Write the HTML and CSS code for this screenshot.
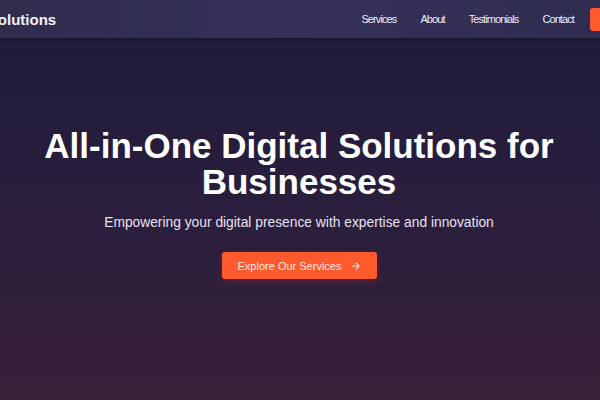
FILE: index.html
```html
<!DOCTYPE html>
<html>
<head>
<meta charset="utf-8">
<link rel="stylesheet" href="styles.css">
</head>
<body>
<header class="header">
  <div class="header-inner">
    <div class="logo">NexGen Solutions</div>
    <nav class="nav">
      <a class="nav-link" href="#">Services</a>
      <a class="nav-link" href="#">About</a>
      <a class="nav-link" href="#">Testimonials</a>
      <a class="nav-link" href="#">Contact</a>
      <a class="nav-cta" href="#">Get Started</a>
    </nav>
  </div>
</header>
<main class="hero">
  <h1 class="hero-title">All-in-One Digital Solutions for Businesses</h1>
  <p class="hero-sub">Empowering your digital presence with expertise and innovation</p>
  <a class="hero-btn" href="#">Explore Our Services <svg class="arrow" width="8" height="8" viewBox="0 0 8 8"><path d="M0.5 4H7M4.2 1.2L7 4L4.2 6.8" fill="none" stroke="#fbe9e3" stroke-width="1.1" stroke-linecap="round" stroke-linejoin="round"/></svg></a>
</main>
</body>
</html>
```
FILE: styles.css
```css
* { box-sizing: border-box; }
html, body { margin: 0; padding: 0; }
body {
  width: 600px;
  height: 400px;
  overflow: hidden;
  font-family: "Liberation Sans", Arial, sans-serif;
  background: linear-gradient(180deg, #1e1b3a 0%, #2b1f3d 60%, #3b2038 100%);
  color: #fff;
}
.header {
  height: 38px;
  background: linear-gradient(90deg, #2f2c4e 0%, #35315a 50%, #2f2c50 100%);
  box-shadow: 0 1px 3px rgba(0,0,0,0.3);
  overflow: hidden;
}
.header-inner {
  display: flex;
  align-items: center;
  height: 38px;
  width: 600px;
}
.logo {
  font-size: 15px;
  font-weight: bold;
  color: #f2f2f6;
  white-space: nowrap;
  margin-left: -73px;
}
.nav {
  display: flex;
  align-items: center;
  margin-left: auto;
  gap: 24px;
  margin-right: -78px;
  flex-shrink: 0;
}
.nav-link {
  color: #ececf3;
  text-decoration: none;
  font-size: 11px;
  letter-spacing: -0.9px;
  white-space: nowrap;
}
.nav-cta {
  background: #ff5a2e;
  color: #fff;
  text-decoration: none;
  font-size: 11px;
  padding: 0 14px;
  border-radius: 3px;
  margin-left: -8px;
  height: 23px;
  width: 88px;
  white-space: nowrap;
  display: flex;
  align-items: center;
}
.hero {
  width: 598px;
  display: flex;
  flex-direction: column;
  align-items: center;
  text-align: center;
  padding-top: 90px;
}
.hero-title {
  margin: 0;
  font-size: 35px;
  line-height: 36px;
  font-weight: bold;
  color: #ffffff;
  width: 540px;
}
.hero-sub {
  margin: 14px 0 0;
  font-size: 13.8px;
  line-height: 18px;
  color: #e6e2f0;
}
.hero-btn {
  margin-top: 20px;
  width: 155px;
  height: 27px;
  display: flex;
  align-items: center;
  justify-content: center;
  gap: 11px;
  background: #ff5a2e;
  color: #fbe9e3;
  text-decoration: none;
  font-size: 11px;
  border-radius: 3px;
  box-shadow: 0 2px 6px rgba(255, 60, 30, 0.25);
}
.arrow { display: block; margin-top: 1px; }
```
